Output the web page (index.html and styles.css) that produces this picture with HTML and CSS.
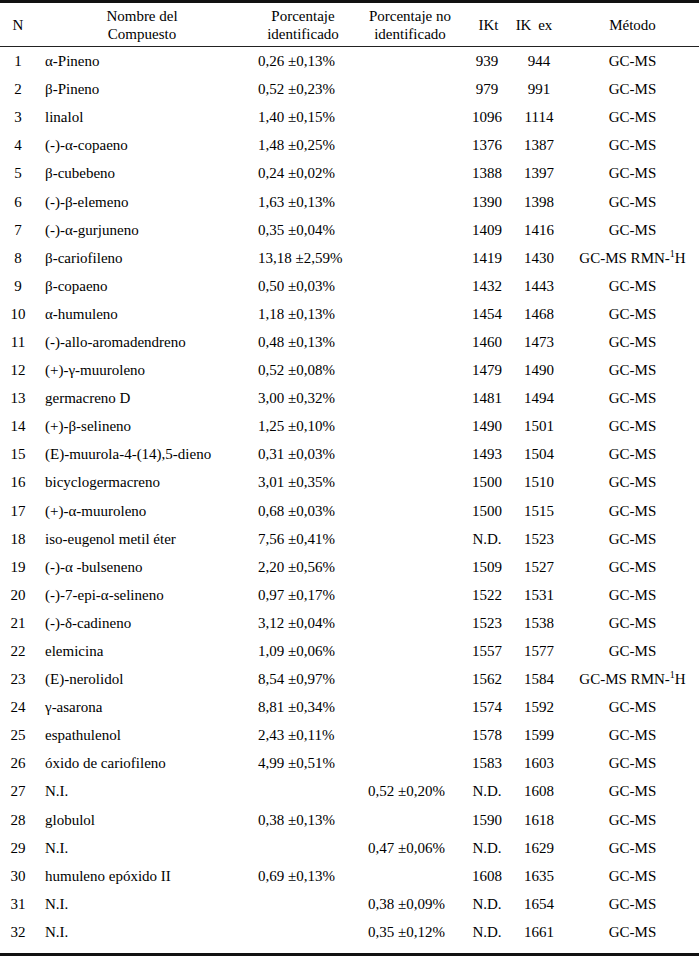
FILE: index.html
```html
<!DOCTYPE html>
<html lang="es">
<head>
<meta charset="utf-8">
<title>Compuestos</title>
<link rel="stylesheet" href="styles.css">
</head>
<body>
<div class="frame">
<table class="data">
<colgroup>
<col class="c-n"><col class="c-name"><col class="c-id"><col class="c-noid"><col class="c-ikt"><col class="c-ikex"><col class="c-met">
</colgroup>
<thead>
<tr>
<th>N</th>
<th>Nombre del<br>Compuesto</th>
<th>Porcentaje<br>identificado</th>
<th>Porcentaje no<br>identificado</th>
<th class="h-ikt">IKt</th>
<th class="h-ikex">IK ex</th>
<th>Método</th>
</tr>
</thead>
<tbody>
<tr><td>1</td><td>α-Pineno</td><td>0,26 ±0,13%</td><td></td><td>939</td><td>944</td><td>GC-MS</td></tr>
<tr><td>2</td><td>β-Pineno</td><td>0,52 ±0,23%</td><td></td><td>979</td><td>991</td><td>GC-MS</td></tr>
<tr><td>3</td><td>linalol</td><td>1,40 ±0,15%</td><td></td><td>1096</td><td>1114</td><td>GC-MS</td></tr>
<tr><td>4</td><td>(-)-α-copaeno</td><td>1,48 ±0,25%</td><td></td><td>1376</td><td>1387</td><td>GC-MS</td></tr>
<tr><td>5</td><td>β-cubebeno</td><td>0,24 ±0,02%</td><td></td><td>1388</td><td>1397</td><td>GC-MS</td></tr>
<tr><td>6</td><td>(-)-β-elemeno</td><td>1,63 ±0,13%</td><td></td><td>1390</td><td>1398</td><td>GC-MS</td></tr>
<tr><td>7</td><td>(-)-α-gurjuneno</td><td>0,35 ±0,04%</td><td></td><td>1409</td><td>1416</td><td>GC-MS</td></tr>
<tr><td>8</td><td>β-cariofileno</td><td>13,18 ±2,59%</td><td></td><td>1419</td><td>1430</td><td>GC-MS RMN-<sup>1</sup>H</td></tr>
<tr><td>9</td><td>β-copaeno</td><td>0,50 ±0,03%</td><td></td><td>1432</td><td>1443</td><td>GC-MS</td></tr>
<tr><td>10</td><td>α-humuleno</td><td>1,18 ±0,13%</td><td></td><td>1454</td><td>1468</td><td>GC-MS</td></tr>
<tr><td>11</td><td>(-)-allo-aromadendreno</td><td>0,48 ±0,13%</td><td></td><td>1460</td><td>1473</td><td>GC-MS</td></tr>
<tr><td>12</td><td>(+)-γ-muuroleno</td><td>0,52 ±0,08%</td><td></td><td>1479</td><td>1490</td><td>GC-MS</td></tr>
<tr><td>13</td><td>germacreno D</td><td>3,00 ±0,32%</td><td></td><td>1481</td><td>1494</td><td>GC-MS</td></tr>
<tr><td>14</td><td>(+)-β-selineno</td><td>1,25 ±0,10%</td><td></td><td>1490</td><td>1501</td><td>GC-MS</td></tr>
<tr><td>15</td><td>(E)-muurola-4-(14),5-dieno</td><td>0,31 ±0,03%</td><td></td><td>1493</td><td>1504</td><td>GC-MS</td></tr>
<tr><td>16</td><td>bicyclogermacreno</td><td>3,01 ±0,35%</td><td></td><td>1500</td><td>1510</td><td>GC-MS</td></tr>
<tr><td>17</td><td>(+)-α-muuroleno</td><td>0,68 ±0,03%</td><td></td><td>1500</td><td>1515</td><td>GC-MS</td></tr>
<tr><td>18</td><td>iso-eugenol metil éter</td><td>7,56 ±0,41%</td><td></td><td>N.D.</td><td>1523</td><td>GC-MS</td></tr>
<tr><td>19</td><td>(-)-α -bulseneno</td><td>2,20 ±0,56%</td><td></td><td>1509</td><td>1527</td><td>GC-MS</td></tr>
<tr><td>20</td><td>(-)-7-epi-α-selineno</td><td>0,97 ±0,17%</td><td></td><td>1522</td><td>1531</td><td>GC-MS</td></tr>
<tr><td>21</td><td>(-)-δ-cadineno</td><td>3,12 ±0,04%</td><td></td><td>1523</td><td>1538</td><td>GC-MS</td></tr>
<tr><td>22</td><td>elemicina</td><td>1,09 ±0,06%</td><td></td><td>1557</td><td>1577</td><td>GC-MS</td></tr>
<tr><td>23</td><td>(E)-nerolidol</td><td>8,54 ±0,97%</td><td></td><td>1562</td><td>1584</td><td>GC-MS RMN-<sup>1</sup>H</td></tr>
<tr><td>24</td><td>γ-asarona</td><td>8,81 ±0,34%</td><td></td><td>1574</td><td>1592</td><td>GC-MS</td></tr>
<tr><td>25</td><td>espathulenol</td><td>2,43 ±0,11%</td><td></td><td>1578</td><td>1599</td><td>GC-MS</td></tr>
<tr><td>26</td><td>óxido de cariofileno</td><td>4,99 ±0,51%</td><td></td><td>1583</td><td>1603</td><td>GC-MS</td></tr>
<tr><td>27</td><td>N.I.</td><td></td><td>0,52 ±0,20%</td><td>N.D.</td><td>1608</td><td>GC-MS</td></tr>
<tr><td>28</td><td>globulol</td><td>0,38 ±0,13%</td><td></td><td>1590</td><td>1618</td><td>GC-MS</td></tr>
<tr><td>29</td><td>N.I.</td><td></td><td>0,47 ±0,06%</td><td>N.D.</td><td>1629</td><td>GC-MS</td></tr>
<tr><td>30</td><td>humuleno epóxido II</td><td>0,69 ±0,13%</td><td></td><td>1608</td><td>1635</td><td>GC-MS</td></tr>
<tr><td>31</td><td>N.I.</td><td></td><td>0,38 ±0,09%</td><td>N.D.</td><td>1654</td><td>GC-MS</td></tr>
<tr><td>32</td><td>N.I.</td><td></td><td>0,35 ±0,12%</td><td>N.D.</td><td>1661</td><td>GC-MS</td></tr>
</tbody>
</table>
</div>
</body>
</html>
```

FILE: styles.css
```css
html, body {
  margin: 0;
  padding: 0;
  background: #ffffff;
}

body {
  font-family: "Liberation Serif", "Times New Roman", serif;
  font-size: 15px;
  color: #000000;
}

.frame {
  width: 699px;
  border-top: 3px solid #111111;
  border-bottom: 3px solid #111111;
  padding-bottom: 7px;
}

.data {
  width: 699px;
  border-collapse: collapse;
  table-layout: fixed;
}

.c-n { width: 36px; }
.c-name { width: 212px; }
.c-id { width: 110px; }
.c-noid { width: 104px; }
.c-ikt { width: 50px; }
.c-ikex { width: 54px; }
.c-met { width: 133px; }

.data th {
  font-weight: normal;
  height: 43px;
  padding: 0;
  line-height: 18px;
  text-align: center;
  vertical-align: middle;
  border-bottom: 1px solid #222222;
}

.data th.h-ikt {
  padding-left: 3px;
}

.data th.h-ikex {
  word-spacing: 3px;
  padding-right: 10px;
}

.data td {
  height: 28.1px;
  padding: 0;
  line-height: 18px;
  vertical-align: middle;
  white-space: nowrap;
  text-align: center;
}

.data td:nth-child(2) {
  text-align: left;
  padding-left: 9px;
}

.data td:nth-child(3),
.data td:nth-child(4) {
  text-align: left;
  padding-left: 10px;
}

.data sup {
  font-size: 10px;
  line-height: 0;
  vertical-align: 6px;
}
```
